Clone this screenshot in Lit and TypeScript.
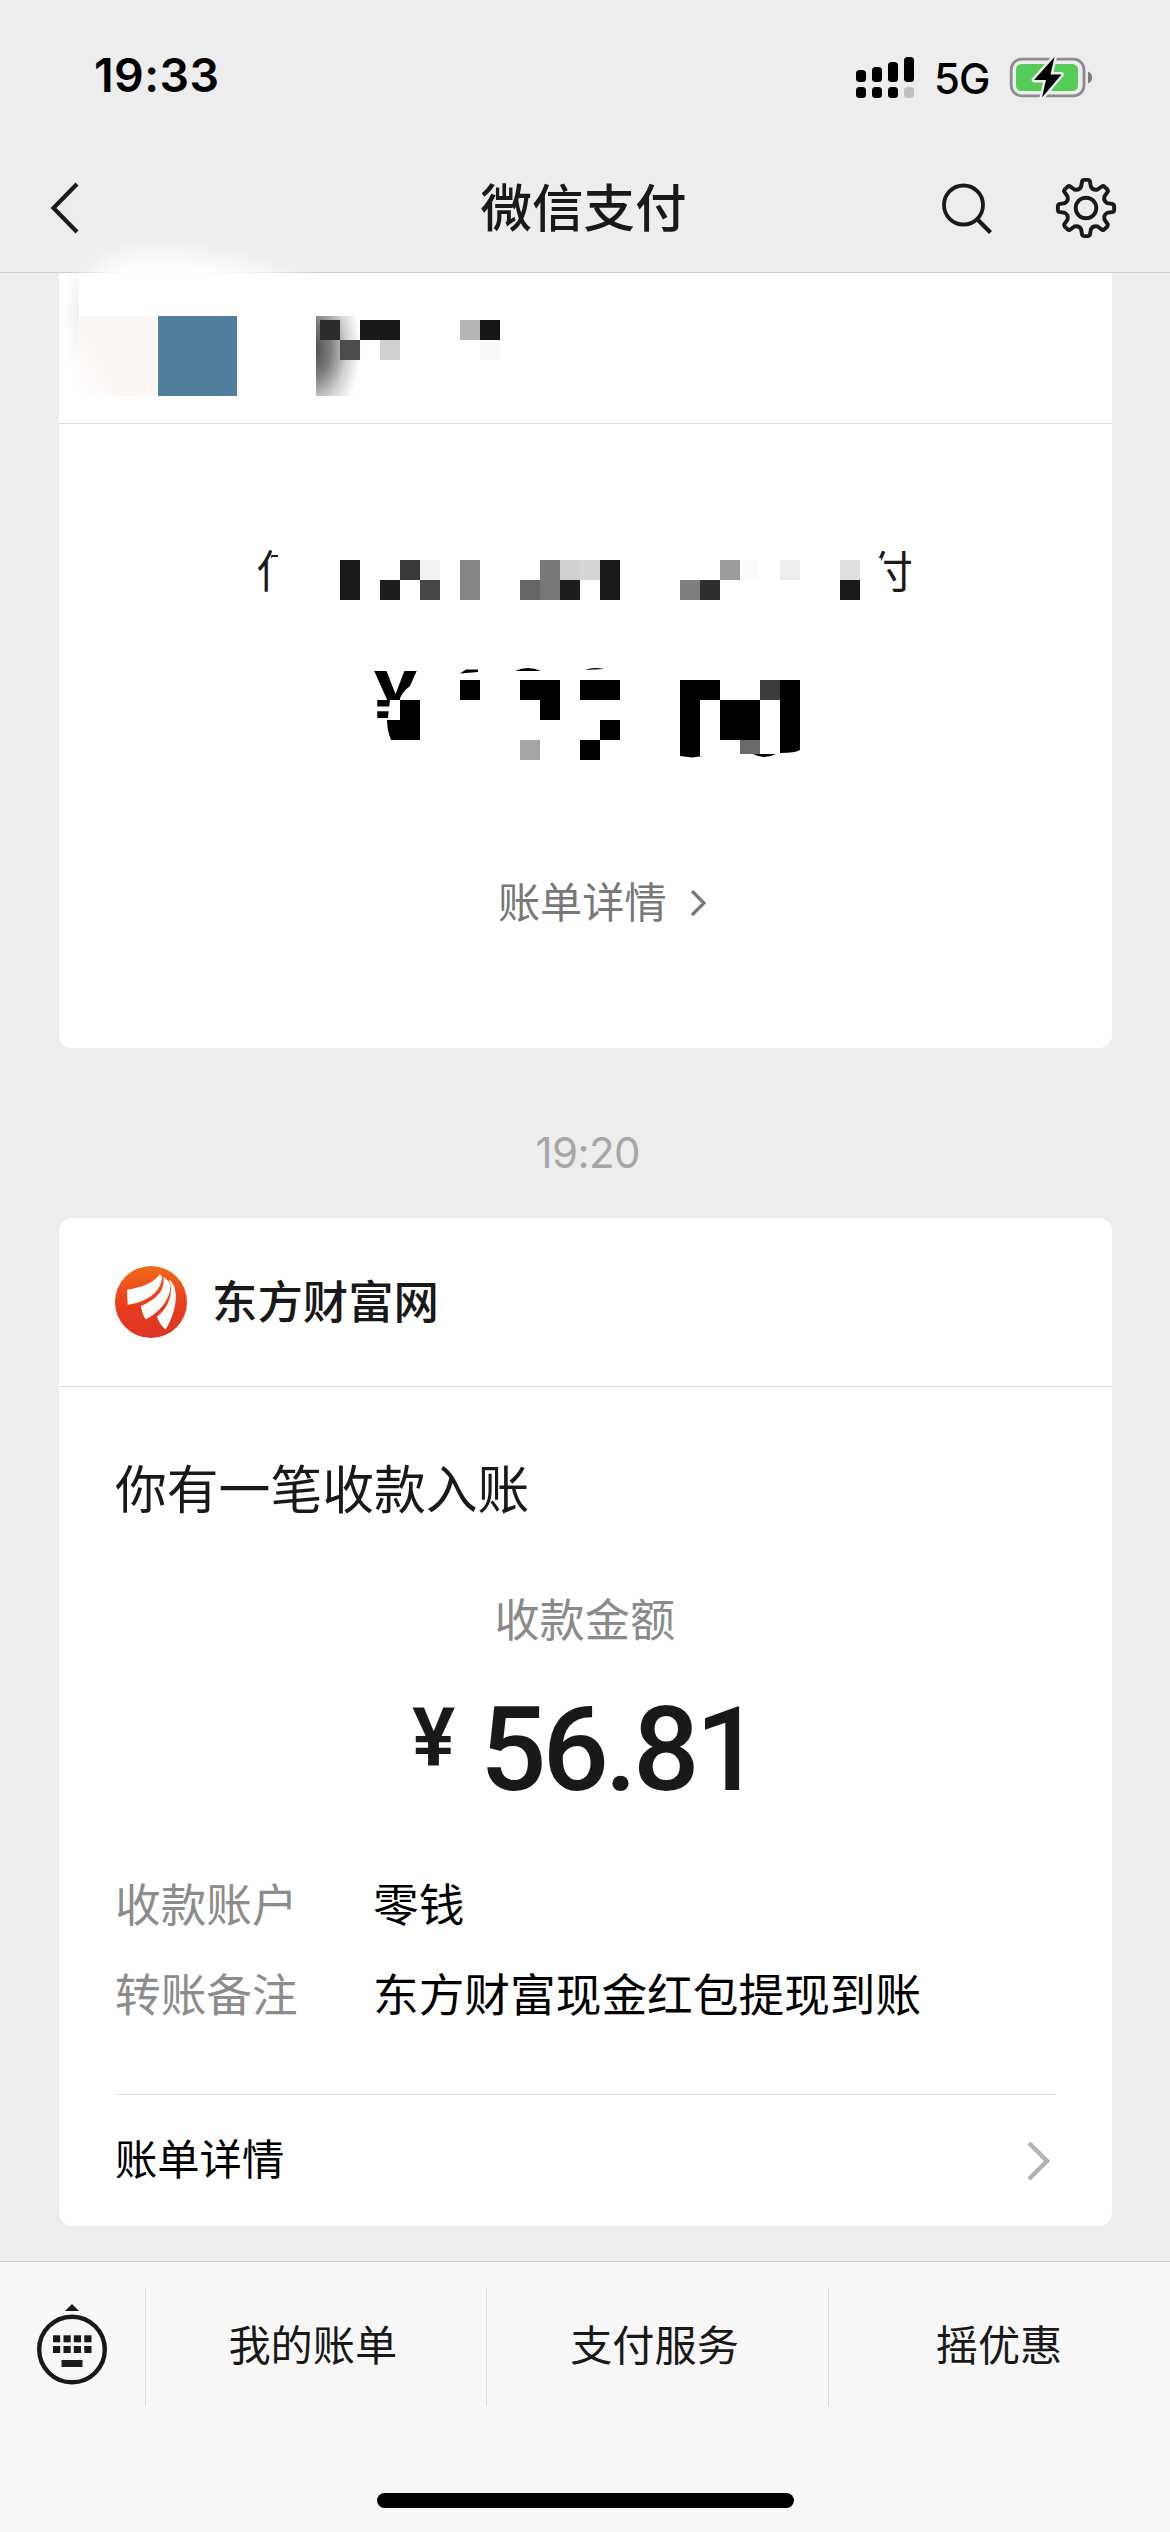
import { LitElement, html, css, svg } from "lit";
import { customElement } from "lit/decorators.js";

type Block = [x: number, y: number, w: number, h: number, fill: string];

// Censored tiles of the first card's header row; coordinates are local to that row.
const HEADER_BLOCKS: Block[] = [
  [99, 43, 79, 80, "#4f7e9f"],
  [261, 47, 20, 20, "#2d2d2d"],
  [301, 47, 40, 20, "#191919"],
  [281, 67, 20, 20, "#4c4c4c"],
  [321, 67, 20, 20, "#d0d0d0"],
  [401, 47, 20, 20, "#b5b5b5"],
  [421, 47, 20, 20, "#161616"],
  [421, 67, 20, 20, "#f9f9f9"],
];

const TITLE_BLOCKS: Block[] = [
  [340, 560, 20, 40, "#1a1a1a"],
  [380, 580, 20, 20, "#1d1d1d"],
  [400, 560, 20, 20, "#3a3a3a"],
  [420, 560, 20, 20, "#f2f2f2"],
  [420, 580, 20, 20, "#464646"],
  [460, 560, 20, 40, "#868686"],
  [520, 580, 20, 20, "#666666"],
  [540, 560, 20, 40, "#787878"],
  [560, 560, 20, 20, "#d0d0d0"],
  [580, 560, 20, 20, "#d6d6d6"],
  [560, 580, 20, 20, "#1d1d1d"],
  [600, 560, 20, 40, "#1a1a1a"],
  [680, 580, 20, 20, "#7f7f7f"],
  [700, 580, 20, 20, "#2f2f2f"],
  [720, 560, 20, 20, "#9c9c9c"],
  [740, 560, 18, 20, "#fbfbfb"],
  [780, 560, 20, 20, "#ededed"],
  [840, 560, 20, 20, "#e0e0e0"],
  [840, 580, 20, 20, "#1a1a1a"],
];

const AMOUNT_BLOCKS: Block[] = [
  [400, 700, 20, 40, "#000"],
  [460, 680, 20, 20, "#000"],
  [520, 680, 40, 20, "#000"],
  [540, 700, 20, 20, "#000"],
  [520, 740, 20, 20, "#a5a5a5"],
  [580, 680, 40, 20, "#000"],
  [600, 720, 20, 20, "#000"],
  [580, 740, 20, 20, "#000"],
  [680, 680, 40, 20, "#000"],
  [680, 700, 20, 56, "#000"],
  [720, 700, 40, 40, "#000"],
  [740, 740, 20, 14, "#6a6a6a"],
  [760, 680, 20, 20, "#3d3d3d"],
];

const drawBlocks = (blocks: Block[]) =>
  blocks.map(([x, y, w, h, fill]) => svg`<rect x=${x} y=${y} width=${w} height=${h} fill=${fill} />`);

const gearPath = (() => {
  const points: string[] = [];
  const at = (r: number, deg: number) => {
    const a = ((deg - 90) * Math.PI) / 180;
    return `${(32 + r * Math.cos(a)).toFixed(2)} ${(32 + r * Math.sin(a)).toFixed(2)}`;
  };
  for (let i = 0; i < 8; i++) {
    const c = i * 45;
    points.push(
      `${i ? "L" : "M"}${at(21.8, c - 13)}`,
      `L${at(27.2, c - 8.2)}`,
      `Q${at(28.2, c - 7.4)} ${at(28.2, c - 4.5)}`,
      `L${at(28.2, c + 4.5)}`,
      `Q${at(28.2, c + 7.4)} ${at(27.2, c + 8.2)}`,
      `L${at(21.8, c + 13)}`,
      `Q${at(18.6, c + 22.5)} ${at(21.8, c + 32)}`,
    );
  }
  return points.join(" ") + "Z";
})();

@customElement("app-root")
export class AppRoot extends LitElement {
  static styles = css`
    :host {
      display: block;
      width: 1170px;
      height: 2532px;
      overflow: hidden;
      background: #ededed;
      color: #191919;
      font-family: Inter, "Noto Sans CJK SC", sans-serif;
    }
    * { box-sizing: border-box; }
    svg { display: block; flex: none; }
    .screen { display: flex; flex-direction: column; height: 100%; }
    .top { height: 273px; border-bottom: 1px solid #cfcfcf; position: relative; }
    .status { display: flex; height: 146px; padding: 0 77px 0 94px; justify-content: space-between; color: #000; }
    .clock { font-size: 46.5px; font-weight: 600; line-height: 56px; margin-top: 47px; letter-spacing: 0.4px; }
    .indicators { display: flex; margin-top: 51px; }
    .net { font-size: 42px; font-weight: 500; line-height: 54px; margin: 1px 0 0 20px; width: 75px; letter-spacing: -1px; }
    .nav { display: grid; grid-template-columns: 200px 1fr 200px; height: 124px; align-items: center; position: relative; z-index: 1; }
    .back { margin-left: 46px; }
    .title { text-align: center; font-size: 51.5px; font-weight: 500; line-height: 76px; padding-right: 3px; }
    .tools { display: flex; gap: 54px; margin-left: -34px; }
    .smear { position: absolute; left: 40px; top: 216px; z-index: 0; }
    .feed { flex: 1; padding: 0 58.5px 0 59px; }
    .card { background: #fff; display: flex; flex-direction: column; }
    .censored { height: 775px; border-radius: 0 0 13px 13px; }
    .censored-head { height: 151px; border-bottom: 1px solid #dedede; }
    .censored-body { height: 430px; position: relative; }
    .masked { font-size: 44px; fill: #1a1a1a; }
    .yen-mask { font-family: Roboto, "Open Sans", sans-serif; font-size: 81px; font-weight: 700; fill: #000; }
    .detail-link { display: flex; align-items: center; justify-content: center; gap: 22px; height: 60px; font-size: 42.2px; color: #787878; padding-left: 34px; line-height: 60px; margin-top: 19px; }
    .stamp { height: 170px; padding-top: 80px; text-align: center; font-size: 42px; line-height: 50px; color: #a6a6a6; letter-spacing: -0.6px; padding-left: 5px; }
    .receipt { height: 1008px; border-radius: 13px; }
    .brand { display: flex; align-items: center; gap: 25px; height: 169px; padding: 0 56px; border-bottom: 1px solid #dedede; }
    .brand-name { font-size: 45.4px; font-weight: 500; line-height: 66px; margin-top: 2px; }
    .summary { height: 708px; margin: 0 57px 0 56px; border-bottom: 1px solid #dcdcdc; }
    .headline { font-size: 51.8px; line-height: 76px; margin-top: 65px; }
    .caption { font-size: 45.2px; line-height: 66px; color: #8a8a8a; text-align: center; margin-top: 60px; }
    .amount { display: flex; justify-content: center; height: 116px; margin-top: 38px; font-family: Roboto, "Open Sans", sans-serif; font-weight: 500; gap: 25px; }
    .yen { font-size: 81px; line-height: 94px; font-weight: 600; }
    .figure { font-size: 117px; line-height: 116px; letter-spacing: -4.2px; }
    .facts { display: grid; grid-template-columns: 258px 1fr; row-gap: 24px; margin: 65px 0 0; font-size: 45.7px; line-height: 66px; color: #000; }
    .facts dt { color: #8c8c8c; }
    .facts dd { margin: 0; white-space: nowrap; }
    .more { display: flex; flex: 1; align-items: center; justify-content: space-between; padding: 0 60px 0 56px; font-size: 42.3px; color: #000; }
    .more-label { line-height: 60px; margin-top: -1px; }
    .dock { height: 271px; background: #f7f7f7; border-top: 1px solid #cfcfcf; }
    .menu { display: grid; grid-template-columns: 145.5px 341.5px 342px 1fr; height: 118px; margin-top: 26px; }
    .cell { display: flex; align-items: center; justify-content: center; border-right: 1.5px solid #d9d9d9; padding-right: 6px; font-size: 42.2px; line-height: 60px; }
    .cell:first-child { padding-right: 0; }
    .cell:last-child { border-right: none; padding-right: 1px; }
    .cell-label { margin-top: -2px; }
    .home { width: 417px; height: 15px; border-radius: 8px; background: #000; margin: 87px auto 0; }
  `;

  private renderStatus() {
    return html`
      <div class="status">
        <div class="clock">19:33</div>
        <div class="indicators">
          <svg width="59" height="50" viewBox="855 51 59 50">
            <g fill="#000">
              <rect x="856" y="70" width="10" height="12" rx="3.5" />
              <rect x="872" y="67" width="10" height="15" rx="3.5" />
              <rect x="888" y="62" width="10" height="20" rx="3.5" />
              <rect x="904" y="57" width="10" height="25" rx="3.5" />
              <rect x="856" y="87" width="10" height="11" rx="3.5" />
              <rect x="872" y="87" width="10" height="11" rx="3.5" />
              <rect x="888" y="87" width="10" height="11" rx="3.5" />
              <rect x="904" y="87" width="10" height="11" rx="3.5" fill="#c0c0c0" />
            </g>
          </svg>
          <div class="net">5G</div>
          <svg width="84" height="50" viewBox="1008 51 84 50">
            <rect x="1010.2" y="59.2" width="72.8" height="36.6" rx="10.5" fill="none" stroke="#8c8c8c" stroke-width="2.8" />
            <path d="M1087 71.5 Q1091 73 1091 77.5 T1087 83.5Z" fill="#7b7b7b" />
            <rect x="1015" y="64" width="62" height="27" rx="5.5" fill="#55cb58" />
            <path d="M1053.5 57 L1033 80 H1045 L1041 97.500 L1060.500 74.500 H1049.500Z" fill="#000" stroke="#ededed" stroke-width="5" stroke-linejoin="round" paint-order="stroke" />
          </svg>
        </div>
      </div>
    `;
  }

  private renderNav() {
    return html`
      <svg class="smear" width="320" height="57" viewBox="40 216 320 57">
        <defs><filter id="soft" x="-30%" y="-50%" width="160%" height="200%"><feGaussianBlur stdDeviation="11" /></filter></defs>
        <path d="M78 300 C90 258 130 250 160 252 C210 254 260 266 300 284 V310 H78Z" fill="#fff" filter="url(#soft)" />
      </svg>
      <div class="nav">
        <svg class="back" width="40" height="60" viewBox="46 177 40 60">
          <path d="M77 183 L53.500 207 L77 231" fill="none" stroke="#191919" stroke-width="4.200" />
        </svg>
        <div class="title">微信支付</div>
        <div class="tools">
          <svg width="64" height="64" viewBox="936 175 64 64">
            <g fill="none" stroke="#191919" stroke-width="3.800">
              <circle cx="963.500" cy="204" r="19.500" />
              <path d="M977 218 L990.500 231.500" stroke-width="4.200" />
            </g>
          </svg>
          <svg width="64" height="64" viewBox="0 0 64 64">
            <g fill="none" stroke="#191919" stroke-width="3.900" stroke-linejoin="round">
              <path d=${gearPath} />
              <circle cx="32" cy="32" r="10.300" />
            </g>
          </svg>
        </div>
      </div>
    `;
  }

  private renderCensoredCard() {
    return html`
      <section class="card censored">
        <div class="censored-head">
          <svg width="600" height="149" viewBox="0 0 600 149">
            <defs>
              <radialGradient id="shade" gradientUnits="userSpaceOnUse" cx="0" cy="0" r="1" gradientTransform="translate(255 76) scale(47 76)">
                <stop offset="0" stop-color="#4c4c4c" />
                <stop offset="0.350" stop-color="#7c7c7c" />
                <stop offset="0.700" stop-color="#d2d2d2" />
                <stop offset="1" stop-color="#fff" />
              </radialGradient>
              <radialGradient id="edge" gradientUnits="userSpaceOnUse" cx="0" cy="0" r="1" gradientTransform="translate(20 42) scale(16 58)">
                <stop offset="0" stop-color="#f0f0f0" />
                <stop offset="1" stop-color="#fff" />
              </radialGradient>
              <linearGradient id="blush" x1="0" x2="1" y1="1" y2="0.4">
                <stop offset="0" stop-color="#fff" />
                <stop offset="0.500" stop-color="#fcf6f4" />
              </linearGradient>
            </defs>
            <rect x="0" y="0" width="20" height="100" fill="url(#edge)" />
            <rect x="20" y="43" width="78" height="80" fill="url(#blush)" />
            <rect x="257" y="43" width="50" height="80" fill="url(#shade)" />
            ${drawBlocks(HEADER_BLOCKS)}
          </svg>
        </div>
        <div class="censored-body">
          <svg width="1052" height="430" viewBox="59 424 1052 430">
            <defs>
              <clipPath id="clip-a"><path d="M250 540 H272 V552 H278 V557 H272 L268 600 H250Z" /></clipPath>
              <clipPath id="clip-b"><path d="M868 540 H920 V600 H881 V558 H868Z" /></clipPath>
              <clipPath id="clip-c"><path d="M370 665 H420 V680 Q404 688 400 698 V700 H390 L387 725 H370Z" /></clipPath>
            </defs>
            <g clip-path="url(#clip-a)"><text class="masked" x="257" y="588">使</text></g>
            <g clip-path="url(#clip-b)"><text class="masked" x="869" y="588">付</text></g>
            ${drawBlocks(TITLE_BLOCKS)}
            <g clip-path="url(#clip-c)"><text class="yen-mask" x="395.500" y="729" text-anchor="middle">¥</text></g>
            ${drawBlocks(AMOUNT_BLOCKS)}
            <path d="M387 720 H400 V740 H391 Q387 730 387 720Z" />
            <path d="M460 673.500 L466 669.500 H478 V672Z" />
            <path d="M515 671 Q528 665 541 671Z" />
            <path d="M585 670 Q594 666.500 604 669Z" />
            <path d="M753 754 Q764 760 776 754Z" />
            <path d="M780 680 H800 V750 Q796 753 780 753Z" />
            <path d="M680 756 H703 L692 757.500Z" />
          </svg>
        </div>
        <div class="detail-link">
          <span>账单详情</span>
          <svg width="18" height="32" viewBox="0 0 18 32">
            <path d="M3 4 L15 16 L3 28" fill="none" stroke="#787878" stroke-width="3.200" />
          </svg>
        </div>
      </section>
    `;
  }

  private renderReceipt() {
    return html`
      <section class="card receipt">
        <div class="brand">
          <svg width="72" height="72" viewBox="196 197 216 216">
            <defs>
              <linearGradient id="flame" x1="0" x2="0" y1="0" y2="1">
                <stop offset="0" stop-color="#f36a1c" />
                <stop offset="0.550" stop-color="#e83c1b" />
                <stop offset="1" stop-color="#dc3425" />
              </linearGradient>
            </defs>
            <circle cx="304" cy="305" r="108" fill="url(#flame)" />
            <g fill="#fff">
              <path d="M331 221 C310 250 276 261 232 268 L234 313 C286 305 334 280 337 229Z" />
              <path d="M341 230 C348 270 320 297 274 317 C276 332 280 345 288 357 C332 338 372 284 359 246 Q352 236 341 230Z" />
              <path d="M357 237 C388 258 386 325 348 388 C336 376 326 364 322 349 C358 322 374 275 357 237Z" />
            </g>
          </svg>
          <div class="brand-name">东方财富网</div>
        </div>
        <div class="summary">
          <div class="headline">你有一笔收款入账</div>
          <div class="caption">收款金额</div>
          <div class="amount"><span class="yen">¥</span><span class="figure">56.81</span></div>
          <dl class="facts">
            <dt>收款账户</dt><dd>零钱</dd>
            <dt>转账备注</dt><dd>东方财富现金红包提现到账</dd>
          </dl>
        </div>
        <div class="more">
          <span class="more-label">账单详情</span>
          <svg width="28" height="44" viewBox="0 0 28 44">
            <path d="M5 4 L23 22 L5 40" fill="none" stroke="#b2b2b2" stroke-width="4.500" />
          </svg>
        </div>
      </section>
    `;
  }

  private renderDock() {
    const xs = [53, 63.5, 73.8, 84.3];
    return html`
      <footer class="dock">
        <div class="menu">
          <div class="cell">
            <svg width="80" height="90" viewBox="32 2302 80 90">
              <path d="M72 2304 L79 2311 H65Z" fill="#191919" />
              <circle cx="72" cy="2349.500" r="32.800" fill="none" stroke="#191919" stroke-width="4.400" />
              ${[2335.3, 2346].map((y) => xs.map((x) => svg`<rect x=${x} y=${y} width="7.200" height="7" fill="#191919" />`))}
              <rect x="61.500" y="2360" width="21" height="7" fill="#191919" />
            </svg>
          </div>
          ${["我的账单", "支付服务", "摇优惠"].map(
            (label) => html`<div class="cell"><span class="cell-label">${label}</span></div>`,
          )}
        </div>
        <div class="home"></div>
      </footer>
    `;
  }

  render() {
    return html`
      <div class="screen" lang="zh-CN">
        <header class="top">${this.renderStatus()} ${this.renderNav()}</header>
        <main class="feed">
          ${this.renderCensoredCard()}
          <div class="stamp">19:20</div>
          ${this.renderReceipt()}
        </main>
        ${this.renderDock()}
      </div>
    `;
  }
}
